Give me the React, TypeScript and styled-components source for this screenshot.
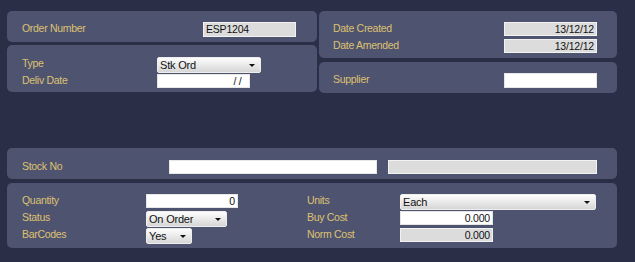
import React from "react";
import styled, { createGlobalStyle } from "styled-components";

const GlobalStyle = createGlobalStyle`
  html, body {
    margin: 0;
    padding: 0;
    background: #2a2e47;
  }
  body {
    font-family: "Liberation Sans", Arial, sans-serif;
  }
`;

const Page = styled.div`
  width: 635px;
  height: 262px;
  box-sizing: border-box;
  padding: 11px 18px 0 7px;
  background: #2a2e47;
  overflow: hidden;
`;

const TopGrid = styled.div`
  display: grid;
  grid-template-columns: 310px 298px;
  column-gap: 2px;
`;

const Column = styled.div`
  display: flex;
  flex-direction: column;
  gap: 3px;
`;

const Panel = styled.div<{ $h: number; $pt?: number; $pl?: number; $mt?: number }>`
  box-sizing: border-box;
  height: ${(p) => p.$h}px;
  margin-top: ${(p) => p.$mt ?? 0}px;
  padding: ${(p) => p.$pt ?? 11}px 0 0 ${(p) => p.$pl ?? 15}px;
  background: #4e546f;
  border-radius: 5px;
`;

const Row = styled.div`
  display: flex;
  align-items: flex-start;
  height: 17px;
`;

const Label = styled.div<{ $w: number }>`
  width: ${(p) => p.$w}px;
  flex: none;
  color: #dfc172;
  font-size: 10.5px;
  letter-spacing: -0.3px;
  line-height: 13px;
`;

const TextBox = styled.div<{ $w: number; $grey?: boolean; $right?: boolean; $h?: number }>`
  box-sizing: border-box;
  width: ${(p) => p.$w}px;
  height: ${(p) => p.$h ?? 15}px;
  flex: none;
  background: ${(p) => (p.$grey ? "#dcdcdc" : "#ffffff")};
  border: 1px solid ${(p) => (p.$grey ? "#f2f2f2" : "#e6e6e6")};
  color: #111;
  font-size: 10.5px;
  letter-spacing: -0.2px;
  line-height: 13px;
  text-align: ${(p) => (p.$right ? "right" : "left")};
  padding: 0 2px;
  white-space: pre;
`;

const SelectBox = styled.div<{ $w: number }>`
  box-sizing: border-box;
  position: relative;
  width: ${(p) => p.$w}px;
  height: 16px;
  flex: none;
  background: linear-gradient(#fdfdfd, #e6e6e6 60%, #d6d6d6);
  border: 1px solid #eeeeee;
  border-radius: 2px;
  color: #111;
  font-size: 11px;
  letter-spacing: -0.2px;
  line-height: 14px;
  padding-left: 2px;
`;

const Arrow = styled.span`
  position: absolute;
  right: 5px;
  top: 6px;
  width: 0;
  height: 0;
  border-left: 3px solid transparent;
  border-right: 3px solid transparent;
  border-top: 3px solid #111;
`;

const Gap = styled.div<{ $w: number }>`
  width: ${(p) => p.$w}px;
  flex: none;
`;

const LowerGrid = styled.div`
  display: grid;
  grid-template-columns: 285px 1fr;
`;

const Stack = styled.div`
  display: flex;
  flex-direction: column;
`;

const Select = ({ w, value }: { w: number; value: string }) => (
  <SelectBox $w={w}>
    {value}
    <Arrow />
  </SelectBox>
);

export default function App() {
  return (
    <>
      <GlobalStyle />
      <Page>
        <TopGrid>
          <Column>
            <Panel $h={31}>
              <Row>
                <Label $w={181}>Order Number</Label>
                <TextBox $w={93} $grey>
                  ESP1204
                </TextBox>
              </Row>
            </Panel>
            <Panel $h={47} $pt={12}>
              <Row>
                <Label $w={135}>Type</Label>
                <Select w={104} value="Stk Ord" />
              </Row>
              <Row>
                <Label $w={135}>Deliv Date</Label>
                <TextBox $w={93} $h={14} $right>
                  {"/ /  "}
                </TextBox>
              </Row>
            </Panel>
          </Column>
          <Column>
            <Panel $h={47} $pl={14}>
              <Row>
                <Label $w={171}>Date Created</Label>
                <TextBox $w={93} $h={14} $grey $right>
                  13/12/12
                </TextBox>
              </Row>
              <Row>
                <Label $w={171}>Date Amended</Label>
                <TextBox $w={93} $h={14} $grey $right>
                  13/12/12
                </TextBox>
              </Row>
            </Panel>
            <Panel $h={31} $pl={14} $mt={1}>
              <Row>
                <Label $w={171}>Supplier</Label>
                <TextBox $w={93} />
              </Row>
            </Panel>
          </Column>
        </TopGrid>

        <Panel $h={31} $pt={12} $mt={55}>
          <Row>
            <Label $w={147}>Stock No</Label>
            <TextBox $w={208} $h={14} />
            <Gap $w={11} />
            <TextBox $w={209} $h={14} $grey />
          </Row>
        </Panel>

        <Panel $h={65} $mt={4}>
          <LowerGrid>
            <Stack>
              <Row>
                <Label $w={124}>Quantity</Label>
                <TextBox $w={92} $h={14} $right>
                  0
                </TextBox>
              </Row>
              <Row>
                <Label $w={124}>Status</Label>
                <Select w={81} value="On Order" />
              </Row>
              <Row>
                <Label $w={124}>BarCodes</Label>
                <Select w={46} value="Yes" />
              </Row>
            </Stack>
            <Stack>
              <Row>
                <Label $w={93}>Units</Label>
                <Select w={196} value="Each" />
              </Row>
              <Row>
                <Label $w={93}>Buy Cost</Label>
                <TextBox $w={93} $h={14} $right>
                  0.000
                </TextBox>
              </Row>
              <Row>
                <Label $w={93}>Norm Cost</Label>
                <TextBox $w={93} $h={14} $grey $right>
                  0.000
                </TextBox>
              </Row>
            </Stack>
          </LowerGrid>
        </Panel>
      </Page>
    </>
  );
}
